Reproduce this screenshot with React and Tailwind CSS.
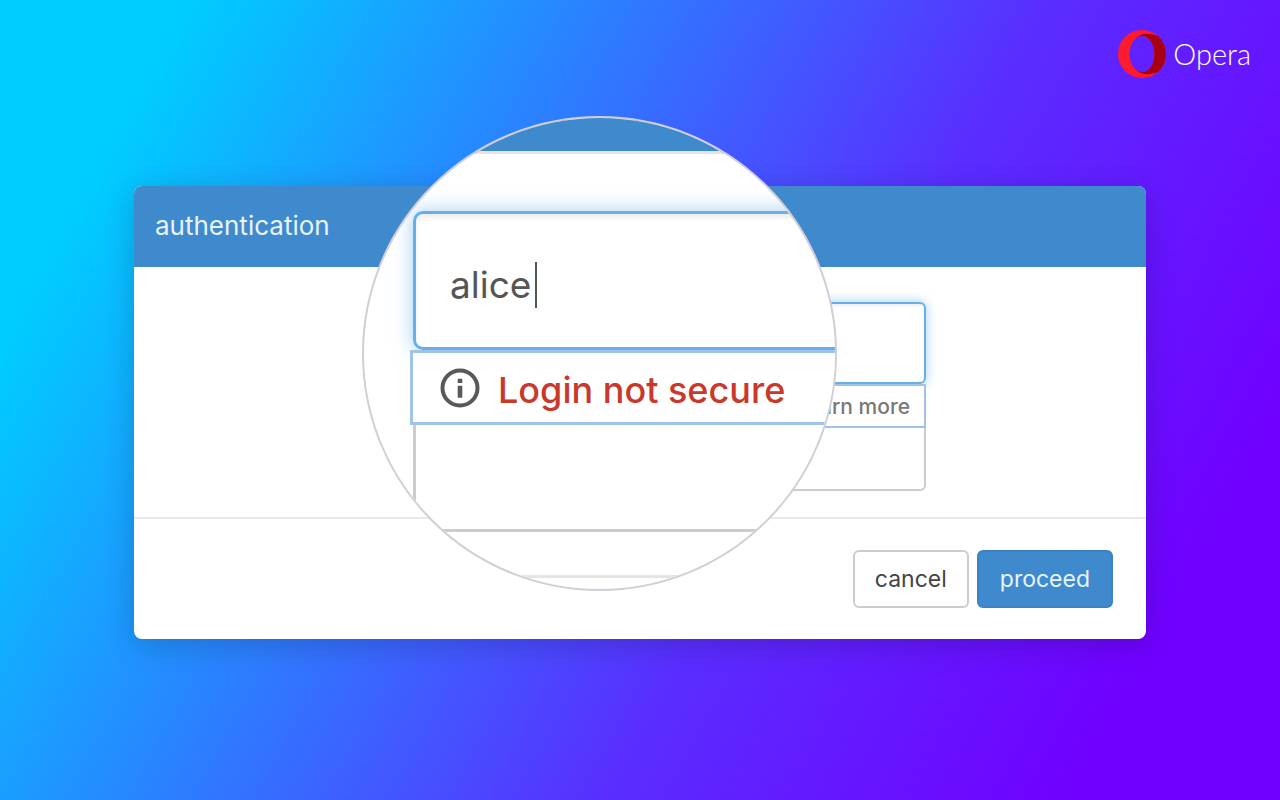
import React, { useState } from 'react';

function OperaLogo() {
  return (
    <div className="flex items-center gap-[7px]">
      <svg viewBox="0 0 48 48" className="size-12" aria-hidden="true">
        <path
          fill="#ff1b2d"
          fillRule="evenodd"
          d="M24 0a24 24 0 1 1 0 48a24 24 0 0 1 0-48zM24 6a12.400 18 0 1 0 0 36a12.400 18 0 1 0 0-36z"
        />
        <path
          fill="#a70014"
          d="M16.500 9.700C19.500 6 23.500 4 28 3.800C32.500 3.800 36.500 4.600 40 6.100A24 24 0 0 1 40 41.900C36.500 43.400 32.500 44.200 28 44.200C23.500 44 19.500 42 16.500 38.300A12.400 18 0 1 0 16.500 9.700z"
        />
      </svg>
      <span className="font-['Lato',sans-serif] text-[29px] leading-8 font-light text-white">Opera</span>
    </div>
  );
}

function InfoIcon() {
  return (
    <svg viewBox="0 0 40 40" className="size-10 shrink-0" fill="none" aria-hidden="true">
      <circle cx="20" cy="20" r="17.500" stroke="#58595b" strokeWidth="4" />
      <path d="M17.700 10.700h4.600v4.300h-4.600zM17.700 17.700h4.600v12h-4.600z" fill="#58595b" />
    </svg>
  );
}

// Enlarged view of the form that sits over the dialog
function Magnifier({ username, onChange }) {
  return (
    <div className="absolute -top-[70px] left-[228px] size-[475px] overflow-hidden rounded-full border-2 border-[#d2ced8] bg-white">
      <div className="h-[36px] border-b-3 border-[#e5e5e5] bg-[#3f8acc]" />
      <label className="mt-[57px] -mr-5 ml-[49px] flex h-[139px] items-center rounded-[10px] border-3 border-[#66afe9] pt-2 pl-[34px] shadow-[inset_0_4px_5px_rgba(0,0,0,0.07),0_0_20px_rgba(102,175,233,0.6)]">
        <input
          type="text"
          aria-label="Username"
          value={username}
          onChange={onChange}
          className="field-sizing-content bg-transparent text-[37px] leading-[46px] text-[#555] outline-none"
        />
        <span className="ml-1 h-[46px] w-[2px] bg-[#555]" />
      </label>
      <div className="relative -mr-5 ml-[46px] flex h-[75px] items-center gap-[18px] border-3 border-[#a0c3ea] bg-white pl-[27px]">
        <InfoIcon />
        <span className="pt-1 text-[36px] leading-[46px] font-medium whitespace-nowrap text-[#c9382a]">Login not secure</span>
      </div>
      <input
        type="password"
        aria-label="Password"
        className="ml-[49px] block h-[107px] w-full border-b-3 border-l-3 border-[#ccc] px-8 outline-none"
      />
      <div className="mt-[43px] h-[3px] bg-[#e5e5e5]" />
    </div>
  );
}

export default function App() {
  const [username, setUsername] = useState('alice');
  const handleChange = (e) => setUsername(e.target.value);

  return (
    <div className="min-h-screen bg-[linear-gradient(119deg,#00cdff_11%,#5a2dff_61%,#7000ff_88%)] pb-40 font-['Inter',sans-serif]">
      <header className="flex justify-end pt-[30px] pr-[29px]">
        <OperaLogo />
      </header>

      <main className="px-[134px] pt-[108px]">
        <form
          onSubmit={(e) => e.preventDefault()}
          className="relative rounded-lg bg-white shadow-[0_6px_30px_rgba(0,0,0,0.18)]"
        >
          <div className="flex h-[81px] items-center rounded-t-lg bg-[#3f8acc] px-[21px] pb-0.5">
            <h1 className="text-[26px] leading-8 text-[#e8f3fc]">authentication</h1>
          </div>

          <div className="flex justify-end border-b-2 border-[#e8e8e8] pt-[35px] pr-[220px] pb-[26px]">
            <div className="w-[500px]">
              <input
                type="text"
                aria-label="Username preview"
                className="block h-[82px] w-full rounded-md border-2 border-[#66afe9] shadow-[inset_0_2px_3px_rgba(0,0,0,0.07),0_0_12px_rgba(102,175,233,0.6)] outline-none"
              />
              <div className="relative flex h-11 items-center justify-end border-2 border-[#a0c3ea] bg-white pt-0.5 pr-[14px]">
                <a href="#learn-more" className="text-[21px] leading-7 font-medium text-[#777]">Learn more</a>
              </div>
              <input
                type="password"
                aria-label="Password preview"
                className="block h-[63px] w-full rounded-b-md border-2 border-t-0 border-[#ccc] outline-none"
              />
            </div>
          </div>

          <div className="flex justify-end gap-2 pt-[31px] pr-[33px] pb-[31px]">
            <button type="button" className="h-[58px] rounded-md border-2 border-[#ccc] px-5 text-[23px] leading-7 text-[#444]">
              cancel
            </button>
            <button type="submit" className="h-[58px] rounded-md border-2 border-[#3a84c5] bg-[#3f8acc] px-[21px] text-[23px] leading-7 text-[#e8f3fc]">
              proceed
            </button>
          </div>

          <Magnifier username={username} onChange={handleChange} />
        </form>
      </main>
    </div>
  );
}
